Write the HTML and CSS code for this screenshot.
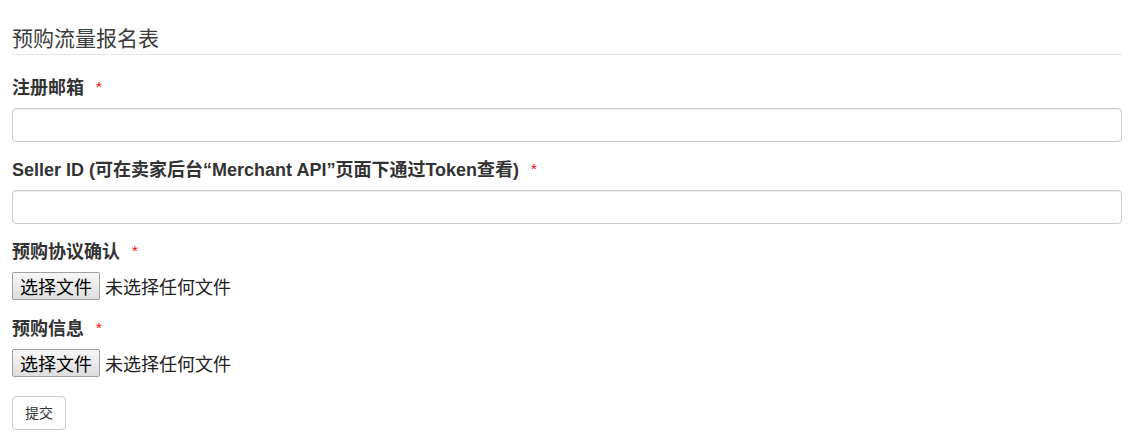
FILE: index.html
```html
<!DOCTYPE html>
<html lang="zh-CN">
<head>
<meta charset="utf-8">
<title>预购流量报名表</title>
<link rel="stylesheet" href="styles.css">
</head>
<body>
<form class="signup">
  <div class="legend">预购流量报名表</div>
  <div class="form-group">
    <label class="field-label">注册邮箱<span class="req">*</span></label>
    <div class="text-input"></div>
  </div>
  <div class="form-group">
    <label class="field-label">Seller ID (可在卖家后台“Merchant API”页面下通过Token查看)<span class="req">*</span></label>
    <div class="text-input"></div>
  </div>
  <div class="form-group file-group">
    <label class="field-label">预购协议确认<span class="req">*</span></label>
    <div class="file-input"><span class="file-btn">选择文件</span><span class="file-name">未选择任何文件</span></div>
  </div>
  <div class="form-group file-group">
    <label class="field-label">预购信息<span class="req">*</span></label>
    <div class="file-input"><span class="file-btn">选择文件</span><span class="file-name">未选择任何文件</span></div>
  </div>
  <div class="actions"><span class="submit-btn">提交</span></div>
</form>
</body>
</html>
```
FILE: styles.css
```css
html, body {
  margin: 0;
  padding: 0;
  background: #fff;
}
body {
  font-family: "Liberation Sans", Arial, "Noto Sans CJK SC", sans-serif;
  color: #333;
}
.signup {
  padding: 24px 14px 0 12px;
  display: flex;
  flex-direction: column;
}
.legend {
  font-size: 21px;
  line-height: 30px;
  color: #3c3c3c;
  border-bottom: 1px solid #e5e5e5;
  margin-bottom: 20px;
}
.form-group {
  display: flex;
  flex-direction: column;
  margin-bottom: 15px;
}
.file-group {
  margin-bottom: 16px;
}
.field-label {
  font-size: 18px;
  font-weight: bold;
  line-height: 24px;
  margin-bottom: 8px;
  color: #333;
}
.req {
  color: #f00;
  font-weight: normal;
  font-size: 15px;
  margin-left: 12px;
  vertical-align: 2px;
}
.text-input {
  height: 32px;
  border: 1px solid #ccc;
  border-radius: 4px;
  box-shadow: inset 0 1px 1px rgba(0,0,0,.075);
  background: #fff;
}
.file-input {
  display: flex;
  align-items: center;
  font-size: 18px;
  height: 28px;
  margin-top: 0;
}
.file-btn {
  box-sizing: border-box;
  height: 28px;
  width: 88px;
  display: flex;
  align-items: center;
  justify-content: center;
  border: 1px solid #a0a0a0;
  border-radius: 2px;
  background: linear-gradient(#f6f6f6, #dedede);
  color: #000;
}
.file-name {
  margin-left: 5px;
  color: #222;
}
.actions {
  display: flex;
  margin-top: 3px;
}
.submit-btn {
  box-sizing: border-box;
  height: 34px;
  padding: 6px 12px;
  font-size: 14px;
  line-height: 20px;
  border: 1px solid #ccc;
  border-radius: 4px;
  background: #fff;
  color: #333;
}
```
